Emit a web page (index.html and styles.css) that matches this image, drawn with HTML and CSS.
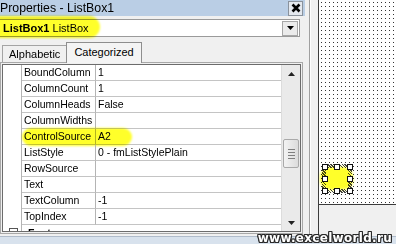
FILE: index.html
```html
<!DOCTYPE html>
<html lang="en">
<head>
    <meta charset="UTF-8">
    <title>Properties - ListBox1</title>
    <link rel="stylesheet" href="styles.css">
</head>
<body>
    <div class="screen">
        <div class="main">
            <div class="props">
                <div class="titlebar">
                    <span class="title">Properties - ListBox1</span>
                    <span class="close">
                        <svg width="10" height="10" viewBox="0 0 10 10"><path d="M1.5 1.5 L8.5 8.5 M8.5 1.5 L1.5 8.5" stroke="#000" stroke-width="2.6"/></svg>
                    </span>
                </div>
                <div class="combo">
                    <span class="mark mark-combo"></span>
                    <span class="combo-text"><b>ListBox1</b> ListBox</span>
                    <span class="drop">
                        <svg width="7" height="4" viewBox="0 0 7 4"><path d="M0 0 H7 L3.5 4 Z" fill="#000"/></svg>
                    </span>
                </div>
                <div class="tabs">
                    <div class="tab">Alphabetic</div>
                    <div class="tab active">Categorized</div>
                </div>
                <div class="grid">
                    <div class="grid-inner">
                        <div class="rows">
                            <div class="row"><span class="gutter"></span><span class="name">BoundColumn</span><span class="value">1</span></div>
                            <div class="row"><span class="gutter"></span><span class="name">ColumnCount</span><span class="value">1</span></div>
                            <div class="row"><span class="gutter"></span><span class="name">ColumnHeads</span><span class="value">False</span></div>
                            <div class="row"><span class="gutter"></span><span class="name">ColumnWidths</span><span class="value"></span></div>
                            <div class="row marked"><span class="gutter"></span><span class="name">ControlSource</span><span class="value">A2</span><span class="mark mark-row"></span></div>
                            <div class="row"><span class="gutter"></span><span class="name">ListStyle</span><span class="value">0 - fmListStylePlain</span></div>
                            <div class="row"><span class="gutter"></span><span class="name">RowSource</span><span class="value"></span></div>
                            <div class="row"><span class="gutter"></span><span class="name">Text</span><span class="value"></span></div>
                            <div class="row"><span class="gutter"></span><span class="name">TextColumn</span><span class="value">-1</span></div>
                            <div class="row"><span class="gutter"></span><span class="name">TopIndex</span><span class="value">-1</span></div>
                            <div class="row category"><span class="gutter"><span class="toggle"></span></span><span class="cat-name">Font</span></div>
                        </div>
                        <div class="scrollbar">
                            <div class="arrow">
                                <svg width="7" height="4" viewBox="0 0 7 4"><path d="M0 4 H7 L3.5 0 Z" fill="#222"/></svg>
                            </div>
                            <div class="track">
                                <div class="thumb"><i></i><i></i><i></i><i></i></div>
                            </div>
                            <div class="arrow">
                                <svg width="7" height="4" viewBox="0 0 7 4"><path d="M0 0 H7 L3.5 4 Z" fill="#222"/></svg>
                            </div>
                        </div>
                    </div>
                </div>
            </div>
            <div class="splitter"></div>
            <div class="designer-col">
                <div class="designer">
                    <div class="control"></div>
                    <div class="mark mark-control"></div>
                    <span class="handle h-tl"></span>
                    <span class="handle h-tm"></span>
                    <span class="handle h-tr"></span>
                    <span class="handle h-ml"></span>
                    <span class="handle h-mr"></span>
                    <span class="handle h-bl"></span>
                    <span class="handle h-bm"></span>
                    <span class="handle h-br"></span>
                </div>
            </div>
        </div>
        <div class="statusbar"></div>
        <div class="watermark">www.excelworld.ru</div>
    </div>
</body>
</html>
```

FILE: styles.css
```css
html, body {
    margin: 0;
    padding: 0;
}
body {
    width: 396px;
    height: 244px;
    overflow: hidden;
    background: #f0f0f0;
    font-family: 'Liberation Sans', Arial, sans-serif;
    color: #000;
}
.screen {
    position: relative;
    width: 396px;
    height: 244px;
    display: flex;
    flex-direction: column;
}
.main {
    display: flex;
    height: 236px;
}

/* properties window */
.props {
    width: 305px;
    display: flex;
    flex-direction: column;
}
.titlebar {
    height: 16px;
    background: #bacee5;
    display: flex;
    align-items: center;
    justify-content: space-between;
}
.title {
    font-size: 12.3px;
    margin-left: 0;
}
.close {
    width: 13px;
    height: 13px;
    margin-right: 2px;
    background: #e4e8ee;
    border: 1px solid #8a929c;
    display: flex;
    align-items: center;
    justify-content: center;
}
.combo {
    position: relative;
    height: 16px;
    margin: 3px 5px 0 0;
    background: #fff;
    border: 1px solid #9a9a9a;
    border-left: none;
    display: flex;
    align-items: center;
    justify-content: space-between;
    font-size: 11px;
}
.combo-text {
    position: relative;
    margin-left: 3px;
}
.drop {
    width: 14px;
    height: 13px;
    margin-right: 1px;
    background: #ebebeb;
    border: 1px solid #a7a7a7;
    display: flex;
    align-items: center;
    justify-content: center;
}

/* yellow marker */
.mark {
    position: absolute;
    background: #ffff2a;
    mix-blend-mode: multiply;
    filter: blur(1px);
}
.mark-combo {
    left: -12px;
    top: -4px;
    width: 112px;
    height: 22px;
    border-radius: 11px;
}
.mark-row {
    left: 19px;
    top: -1px;
    width: 110px;
    height: 18px;
    border-radius: 9px;
}
.mark-control {
    left: 1px;
    top: 167px;
    width: 33px;
    height: 23px;
    border-radius: 10px;
    filter: blur(1.5px);
}

.tabs {
    height: 21px;
    margin-top: 4px;
    padding-left: 2px;
    display: flex;
    align-items: flex-end;
    font-size: 11px;
}
.tab {
    height: 17px;
    padding: 0 6px;
    border: 1px solid #a4a4a4;
    border-bottom: none;
    display: flex;
    align-items: center;
    box-sizing: border-box;
    background: #f0f0f0;
}
.tab.active {
    height: 21px;
    margin-bottom: -1px;
    margin-left: -1px;
    padding: 0 7px;
    background: #f4f4f4;
    position: relative;
    border-color: #8e8e8e;
    padding-bottom: 2px;
}

.grid {
    width: 303px;
    height: 172px;
    box-sizing: border-box;
    border: 1px solid #a8a8a8;
    padding: 1px;
}
.grid-inner {
    height: 100%;
    box-sizing: border-box;
    border: 1px solid #6c6c6c;
    background: #fff;
    display: flex;
    overflow: hidden;
}
.rows {
    flex: 1;
    display: flex;
    flex-direction: column;
}
.row {
    position: relative;
    display: flex;
    height: 16px;
    flex-shrink: 0;
    font-size: 10.5px;
}
.gutter {
    width: 18px;
    flex-shrink: 0;
    border-right: 1px solid #b4b4b4;
    position: relative;
}
.name {
    width: 71px;
    padding-left: 2px;
    flex-shrink: 0;
    border-right: 1px solid #b4b4b4;
    border-bottom: 1px solid #c4c4c4;
    line-height: 15px;
}
.value {
    flex: 1;
    padding-left: 2px;
    border-bottom: 1px solid #c4c4c4;
    line-height: 15px;
}
.category .cat-name {
    padding-left: 6px;
    font-weight: bold;
    line-height: 16px;
}
.toggle {
    position: absolute;
    left: 6px;
    top: 3px;
    width: 7px;
    height: 7px;
    border: 1px solid #555;
    background: #fff;
}

.scrollbar {
    width: 18px;
    flex-shrink: 0;
    background: #eaeaea;
    border-left: 1px solid #dcdcdc;
    display: flex;
    flex-direction: column;
}
.arrow {
    height: 17px;
    display: flex;
    align-items: center;
    justify-content: center;
}
.track {
    flex: 1;
}
.thumb {
    margin: 57px 1px 0 1px;
    height: 27px;
    border: 1px solid #a9a9a9;
    border-radius: 2px;
    background: linear-gradient(to right, #f3f3f3, #dcdcdc);
    display: flex;
    flex-direction: column;
    align-items: center;
    justify-content: center;
    gap: 2px;
}
.thumb i {
    display: block;
    width: 7px;
    height: 1px;
    background: #7f7f7f;
}

.splitter {
    width: 13px;
    background: linear-gradient(to right, #f0f0f0 4px, #a0a0a0 4px, #a0a0a0 5px, #fdfdfd 5px, #fdfdfd 6px, #f0f0f0 6px);
    border-right: 1px solid #3c3c3c;
}

/* form designer */
.designer-col {
    flex: 1;
}
.designer {
    position: relative;
    height: 204px;
    border-bottom: 1px solid #3c3c3c;
    background-color: #fff;
    background-image: radial-gradient(circle at 2.5px 2.5px, #333 0.45px, transparent 0.75px);
    background-size: 4px 4px;
}
.control {
    position: absolute;
    left: 3px;
    top: 164px;
    width: 30px;
    height: 29px;
    box-sizing: border-box;
    border: 4px solid transparent;
    background:
        linear-gradient(#fff, #fff) padding-box,
        repeating-linear-gradient(45deg, #444 0 1px, #fff 1px 2px) border-box;
}
.handle {
    position: absolute;
    width: 4px;
    height: 4px;
    border: 1px solid #111;
    background: #fff;
}
.h-tl { left: 3px; top: 164px; }
.h-tm { left: 15px; top: 164px; }
.h-tr { left: 28px; top: 164px; }
.h-ml { left: 3px; top: 176px; }
.h-mr { left: 28px; top: 176px; }
.h-bl { left: 3px; top: 188px; }
.h-bm { left: 15px; top: 188px; }
.h-br { left: 28px; top: 188px; }

.statusbar {
    height: 7px;
    background: #d8e2ed;
    border-top: 1px solid #b0bccb;
}

.watermark {
    position: absolute;
    right: 4px;
    bottom: -1px;
    font-family: 'DejaVu Sans', sans-serif;
    font-weight: bold;
    font-size: 12px;
    letter-spacing: 0.3px;
    color: #fff;
    text-shadow: 1px 0 #2a2a2a, -1px 0 #2a2a2a, 0 1px #2a2a2a, 0 -1px #2a2a2a,
        1px 1px #2a2a2a, -1px -1px #2a2a2a, 1px -1px #2a2a2a, -1px 1px #2a2a2a;
}
```
